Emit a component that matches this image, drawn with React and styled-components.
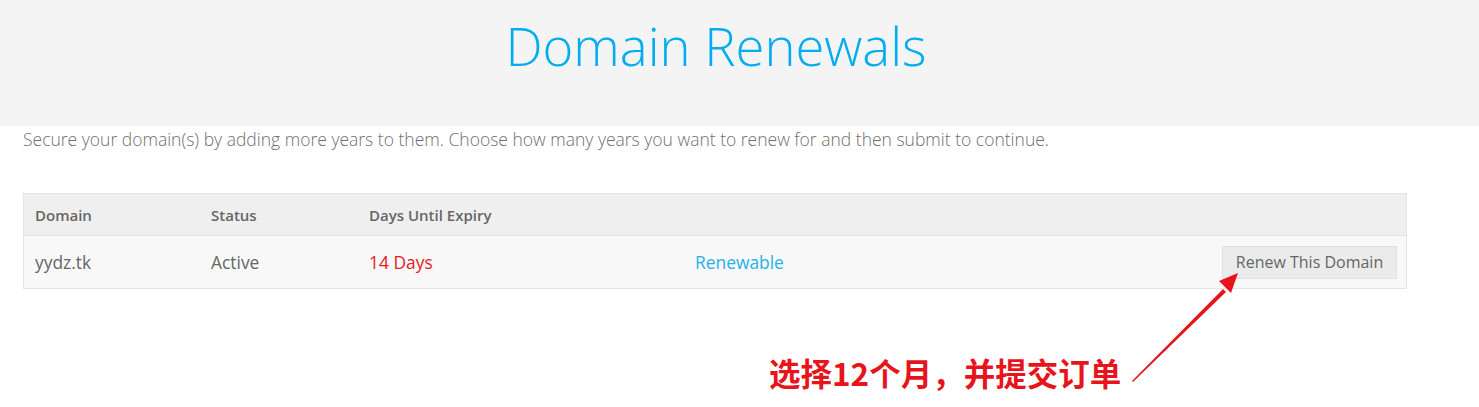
import React from 'react';
import styled, { createGlobalStyle } from 'styled-components';

const GlobalStyle = createGlobalStyle`
    html, body {
        margin: 0;
        padding: 0;
        background: #fff;
    }
    body {
        font-family: 'Open Sans', 'Noto Sans', sans-serif;
    }
`;

const Page = styled.div`
    position: relative;
    width: 1479px;
    height: 407px;
    overflow: hidden;
`;

const HeaderBand = styled.div`
    display: flex;
    justify-content: center;
    align-items: flex-start;
    height: 126px;
    padding: 0 47px 0 0;
    background-color: #f4f4f4;
`;

const Title = styled.h1`
    margin: 10px 0 0 0;
    font-family: 'Open Sans', sans-serif;
    font-weight: 300;
    font-size: 52.6px;
    line-height: 72px;
    color: #00aeef;
`;

const Content = styled.div`
    display: flex;
    flex-direction: column;
    padding: 0 0 0 23px;
    width: 1384px;
`;

const Intro = styled.p`
    margin: 1px 0 0 0;
    font-size: 17.5px;
    font-weight: 300;
    line-height: 25px;
    color: #6f6f6f;
    white-space: nowrap;
`;

const Table = styled.div`
    display: grid;
    grid-template-columns: 176px 158px 326px 1fr auto;
    margin: 41px 0 0 0;
    border: 1px solid #e4e4e4;
`;

const HeadCell = styled.div`
    display: flex;
    align-items: center;
    height: 41px;
    padding: 0 11px;
    background-color: #efefef;
    border-bottom: 1px solid #e2e2e2;
    font-size: 15px;
    font-weight: 600;
    color: #666;
`;

const BodyCell = styled.div`
    display: flex;
    align-items: center;
    justify-content: ${p => (p.$end ? 'flex-end' : 'flex-start')};
    height: 52px;
    padding: 0 ${p => (p.$end ? '9px' : '11px')};
    background-color: #f8f8f8;
    font-size: 17.4px;
    color: ${p => p.$color || '#666'};
`;

const RenewButton = styled.button`
    display: flex;
    align-items: center;
    justify-content: center;
    width: 175px;
    height: 33px;
    padding: 0;
    background-color: #ebebeb;
    border: 1px solid #e1e1e1;
    border-radius: 1px;
    font-family: 'Open Sans', sans-serif;
    font-size: 16px;
    color: #666;
`;

const Note = styled.div`
    margin: 63px 0 0 746px;
    font-family: 'Noto Sans CJK SC', sans-serif;
    font-weight: 700;
    font-size: 31.5px;
    line-height: 40px;
    color: #e8141c;
    white-space: nowrap;
`;

const ArrowLayer = styled.svg`
    position: absolute;
    left: 0;
    top: 0;
    pointer-events: none;
`;

export default function App() {
    return (
        <Page>
            <GlobalStyle />
            <HeaderBand>
                <Title>Domain Renewals</Title>
            </HeaderBand>

            <Content>
                <Intro>
                    Secure your domain(s) by adding more years to them. Choose how many years you want to renew for and then submit to continue.
                </Intro>

                <Table>
                    <HeadCell>Domain</HeadCell>
                    <HeadCell>Status</HeadCell>
                    <HeadCell>Days Until Expiry</HeadCell>
                    <HeadCell />
                    <HeadCell />

                    <BodyCell>yydz.tk</BodyCell>
                    <BodyCell>Active</BodyCell>
                    <BodyCell $color="#e3201b">14 Days</BodyCell>
                    <BodyCell $color="#1fb1ec">Renewable</BodyCell>
                    <BodyCell $end>
                        <RenewButton>Renew This Domain</RenewButton>
                    </BodyCell>
                </Table>

                <Note>选择12个月，并提交订单</Note>
            </Content>

            <ArrowLayer width="1479" height="407">
                <polygon points="1132,381 1223,289 1226,292 1133,382" fill="#e8141c" />
                <polygon points="1238,273 1219,281 1231,293" fill="#e8141c" />
            </ArrowLayer>
        </Page>
    );
}
